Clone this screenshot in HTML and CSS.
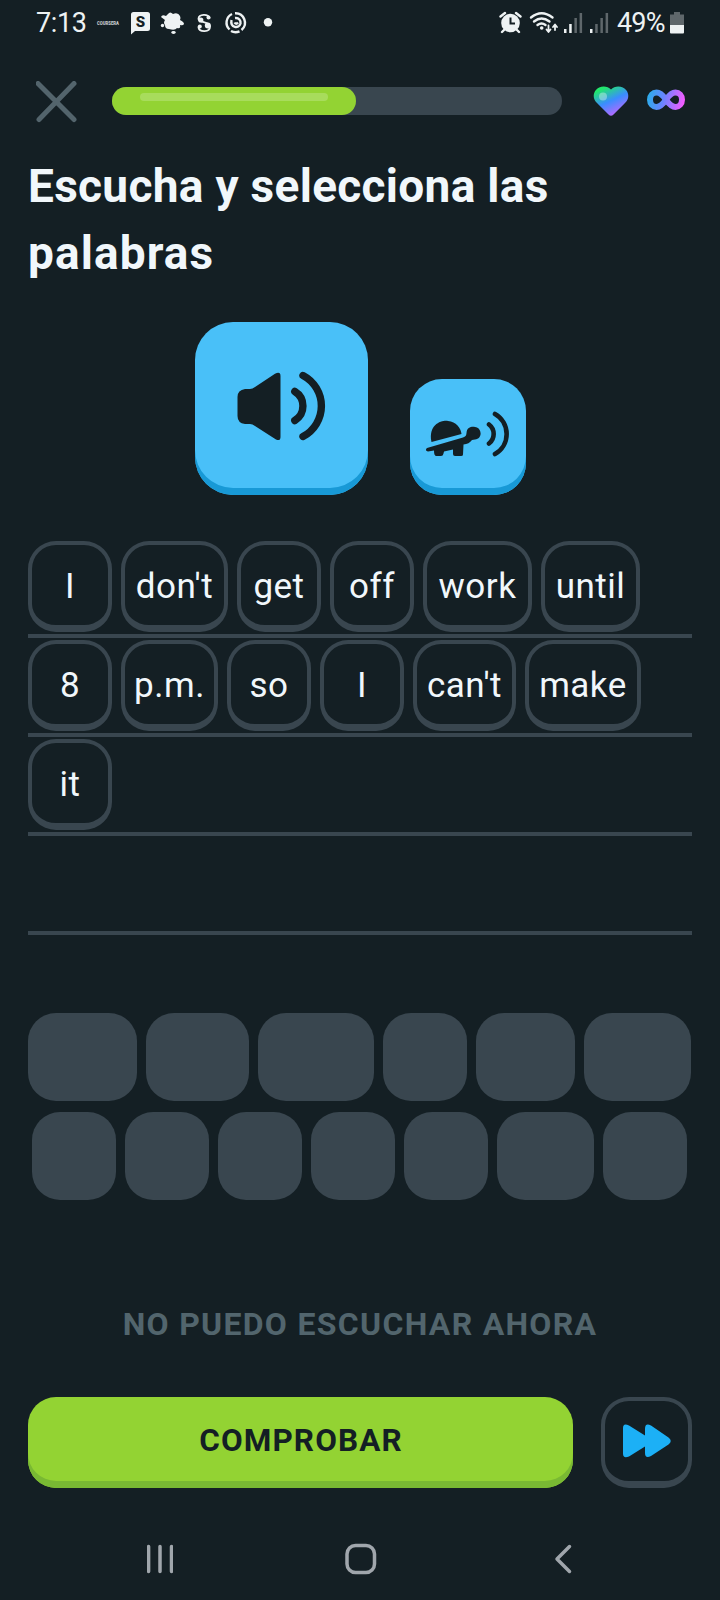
FILE: index.html
```html
<!DOCTYPE html>
<html lang="es">
<head>
<meta charset="utf-8">
<title>Escucha y selecciona las palabras</title>
<link rel="stylesheet" href="styles.css">
</head>
<body>
<div class="phone">
  <div class="status">
    <div class="status-side">
      <span class="clock">7:13</span>
      <svg class="st" width="32" height="46" viewBox="95 0 32 46"><text class="micro" x="97" y="24.500" textLength="22" lengthAdjust="spacingAndGlyphs">COURSERA</text></svg>
      <svg class="st" width="28" height="46" viewBox="127 0 28 46"><path class="ink" d="M133.500 12H147.500Q150 12 150 14.500V28.500Q150 31 147.500 31H135L131 34.500V14.500Q131 12 133.500 12Z"/><text class="badge-s" x="140.500" y="27" text-anchor="middle">S</text></svg>
      <svg class="st" width="35" height="46" viewBox="155 0 35 46"><path class="ink" d="M168 14Q170 11 173 14Q178 12 180 16Q181 18 180 20Q184 22 184 24Q183 26 180 25Q181 29 177 28Q175 31 169 29Q165 29 165 25Q163 23 165 20L161 17Q162 14 166 16Z"/><circle class="ink" cx="162.500" cy="25.500" r="1.700"/><ellipse class="ink" cx="173.500" cy="32.500" rx="2.200" ry="1.400"/></svg>
      <svg class="st" width="29" height="46" viewBox="190 0 29 46"><path class="line" d="M209.500 18C208 13.500 199 14 198.500 18.500C198 23 210 21 210 26.500C210 32.500 199.500 32.500 198.500 27.500"/><circle class="ink" cx="208.500" cy="17.500" r="2"/><circle class="ink" cx="207.800" cy="25.500" r="3"/><circle class="ink" cx="200.800" cy="20" r="2.600"/><circle class="ink" cx="199.800" cy="26.500" r="2"/></svg>
      <svg class="st" width="36" height="46" viewBox="219 0 36 46"><g class="line bold"><path d="M232 14A9.500 9.500 0 0 0 229.500 29.500"/><path d="M235 13.200A9.500 9.500 0 0 1 241.500 30"/><path d="M239.500 31.300A9.500 9.500 0 0 1 231 31"/><path d="M231.500 20C230 28 239 29 240.500 23.500C241 20.500 239 17.500 235 18"/><path d="M234.500 22.500Q236 25 238 22.500"/></g></svg>
      <svg class="st" width="26" height="46" viewBox="255 0 26 46"><circle class="ink" cx="268" cy="22.300" r="4.200"/></svg>
    </div>
    <div class="status-side">
      <svg class="st" width="31" height="46" viewBox="495 0 31 46"><circle class="ink" cx="510.500" cy="23" r="9.300"/><path class="line thick" d="M500.500 16.500L505 13M520.500 16.500L516 13M504.500 29.500L502 32M516.500 29.500L519 32"/><path class="cut" d="M510.500 17.500V23.500H515"/></svg>
      <svg class="st" width="35" height="46" viewBox="526 0 35 46"><g class="line thick"><path d="M531 17.500Q541.500 9 552.500 17.500"/><path d="M534 21.500Q541.500 15.500 549.500 21.500"/><path d="M537.500 25Q541.500 22 545.500 25"/></g><circle class="ink" cx="541.700" cy="28" r="1.800"/><path class="line thin" d="M548.500 25.500V31.500M546.500 29.500L548.500 32L550.500 29.500M555 30V25M553 27L555 24.500L557 27"/></svg>
      <svg class="st" width="26" height="46" viewBox="561 0 26 46"><path class="ink" d="M564 29h2.500v4H564zM569.200 24h2.500v9h-2.500z"/><path class="dim" d="M574.400 18h2.500v15h-2.500zM579.600 13h2.500v20h-2.500z"/></svg>
      <svg class="st" width="26" height="46" viewBox="587 0 26 46"><path class="ink" d="M590 29h2.500v4H590z"/><path class="dim" d="M595.200 24h2.500v9h-2.500zM600.400 18h2.500v15h-2.500zM605.600 13h2.500v20h-2.500z"/></svg>
      <span class="percent">49%</span>
      <svg class="st" width="23" height="46" viewBox="667 0 23 46"><path class="dim" d="M674 12h6v2.500h4V25H670V14.500h4z"/><path class="ink" d="M670 25h14v7.500q0 1-1 1h-12q-1 0-1-1z"/></svg>
    </div>
  </div>

  <header class="lesson-bar">
    <svg class="close" width="42" height="42" viewBox="0 0 42 42"><path d="M2 2.500L38 38.500M38 2.500L3 38.500"/></svg>
    <div class="progress"><div class="progress-fill"><div class="shine"></div></div></div>
    <svg class="heart" width="36" height="31" viewBox="0 0 36 31">
      <defs><linearGradient id="hg" x1="0.150" y1="0" x2="0.700" y2="1"><stop offset="0.100" stop-color="#22e86c"/><stop offset="0.520" stop-color="#3a8dff"/><stop offset="1" stop-color="#c864ff"/></linearGradient></defs>
      <path fill="url(#hg)" d="M18 3.500C22 -1 30 -.5 33.500 4.500C36.500 9 35.500 13.500 32 17L20.500 28.500Q18 31 15.500 28.500L4 17C.5 13.500 -.5 9 2.500 4.500C6 -.5 14 -1 18 3.500Z"/><circle cx="10" cy="10.500" r="4" fill="#fff" opacity=".35"/>
    </svg>
    <svg class="infinity" width="38" height="22" viewBox="0 0 38 22">
      <defs><linearGradient id="ig" gradientUnits="userSpaceOnUse" x1="0" y1="0" x2="38" y2="8"><stop offset="0" stop-color="#24b1e8"/><stop offset="0.450" stop-color="#6685ff"/><stop offset="1" stop-color="#f45bff"/></linearGradient></defs>
      <path fill="none" stroke="url(#ig)" stroke-width="6" d="M19 10.700C15 5 12.500 3.500 9.500 3.500A6.500 7.200 0 0 0 9.500 17.900C12.500 17.900 15 16.400 19 10.700C23 5 25.500 3.500 28.500 3.500A6.500 7.200 0 0 1 28.500 17.900C25.500 17.900 23 16.400 19 10.700Z"/>
    </svg>
  </header>

  <h1 class="title">Escucha y selecciona las <span class="title-end">palabras</span></h1>

  <div class="audio">
    <button class="play play-big">
      <svg width="90" height="70" viewBox="236 371 90 70"><path class="solid" d="M245 389H250Q252.500 389 255 387L275 373.800Q280.500 371 280.500 376V437Q280.500 441.500 276 439.500L255 426Q252.500 424 250 424H245Q237.500 423 237.500 416V397Q237.500 390 245 389Z"/><path class="wave" d="M294.800 391.500A17 17 0 0 1 294.800 420.500M303 375.500A34.500 34.500 0 0 1 303 436.500"/></svg>
    </button>
    <button class="play play-slow">
      <svg width="84" height="46" viewBox="426 411 84 46"><path class="solid" d="M431.500 442C428 424 442 420 448 421C456 421.500 461 428 461.500 434Z"/><path class="solid" d="M427 448L463 437.500Q466.500 436.500 466.500 433C467 427 471.500 426.500 475 427C482 427.500 483 439 475 439.500L472 440Q469 444 463.500 444.500L463 454.500Q463 456 461 456H455Q453 456 453 454V449.500L444 451.500L443.500 453.500Q443 456 441 456H436Q434 455.500 434 450.500L428 451.500Q424.500 450.500 427 448Z"/><path class="wave wave-slow" d="M489 424.500A12 12 0 0 1 489 443.500M495 414A23 23 0 0 1 495 454"/></svg>
    </button>
  </div>

  <main class="answer">
    <div class="answer-row"><span class="word">I</span><span class="word w107">don't</span><span class="word">get</span><span class="word">off</span><span class="word w109">work</span><span class="word w99">until</span></div>
    <div class="answer-row"><span class="word">8</span><span class="word w97">p.m.</span><span class="word">so</span><span class="word">I</span><span class="word w103">can't</span><span class="word w116">make</span></div>
    <div class="answer-row"><span class="word">it</span></div>
    <div class="answer-row"></div>
  </main>

  <section class="bank">
    <div class="bank-row"><i class="slot w109"></i><i class="slot w103"></i><i class="slot w116"></i><i class="slot"></i><i class="slot w99"></i><i class="slot w107"></i></div>
    <div class="bank-row"><i class="slot"></i><i class="slot"></i><i class="slot"></i><i class="slot"></i><i class="slot"></i><i class="slot w97"></i><i class="slot"></i></div>
  </section>

  <div class="cant-listen">NO PUEDO ESCUCHAR AHORA</div>

  <div class="actions">
    <button class="check">COMPROBAR</button>
    <button class="skip"><svg width="48" height="34" viewBox="0 0 48 34"><path d="M0 4Q0-1.500 6 1.500L22 11.500V5Q22-1.500 28 1.500L45.500 13.500Q50 17 45.500 20.500L28 32Q22 35 22 29V22.500L6 32.500Q0 35 0 29.500Z"/></svg></button>
  </div>

  <nav class="nav">
    <svg width="26" height="30" viewBox="147 1544 26 30"><path class="nav-line" d="M148.600 1546.500V1571.500M160 1546.500V1571.500M171.500 1546.500V1571.500"/></svg>
    <svg width="32" height="32" viewBox="0 0 32 32"><rect class="nav-line" x="2" y="2.500" width="27.500" height="27" rx="8.500"/></svg>
    <svg width="18" height="30" viewBox="0 0 18 30"><path class="nav-line" d="M15.500 2.500L3 15L15.500 27.500"/></svg>
  </nav>
</div>
</body>
</html>
```
FILE: styles.css
```css
* { box-sizing: border-box; }
body { margin: 0; background: #141f24; font-family: Roboto, "Liberation Sans", sans-serif; }
button { font-family: inherit; margin: 0; padding: 0; border: 0; background: none; }
svg { display: block; flex: none; }

.phone { width: 720px; height: 1600px; overflow: hidden; background: #141f24; color: #f1f7fb; display: flex; flex-direction: column; }

.status { height: 46px; padding: 0 30px 0 36px; display: flex; justify-content: space-between; color: #eef2f3; font-size: 27px; line-height: 46px; }
.status-side { display: flex; }
.clock { width: 59px; letter-spacing: -0.4px; }
.percent { width: 54px; padding-left: 4px; letter-spacing: -0.8px; white-space: nowrap; }
.ink { fill: #eef2f3; }
.dim { fill: #5f676b; }
.line { fill: none; stroke: #eef2f3; stroke-width: 1.8; stroke-linecap: round; stroke-linejoin: round; }
.line.bold { stroke-width: 2.4; stroke-linecap: butt; }
.line.thick { stroke-width: 2.4; }
.thick { stroke-width: 2.4; }
.cut { fill: none; stroke: #141f24; stroke-width: 2; }
.micro { font-size: 5px; font-weight: 900; fill: #c4cacc; }
.badge-s { font-size: 15px; font-weight: 900; fill: #141f24; }

.lesson-bar { height: 42px; margin-top: 35px; padding-left: 36px; display: flex; align-items: flex-start; }
.close path { stroke: #53646c; stroke-width: 5; stroke-linecap: round; }
.progress { width: 450px; height: 28px; margin: 6px 0 0 34px; border-radius: 14px; background: #39464f; flex: none; }
.progress-fill { width: 244px; height: 28px; border-radius: 14px; background: #93d333; padding: 6px 28px; }
.shine { height: 8px; border-radius: 4px; background: #a8dc5c; }
.heart { margin: 5px 0 0 31px; }
.infinity { margin: 8px 0 0 18px; }

.title { margin: 30px 28px 0 28px; font-size: 46px; line-height: 67px; font-weight: 700; letter-spacing: 0.3px; }
.title-end { letter-spacing: 1.1px; }

.audio { margin-top: 35px; height: 173px; padding-left: 195px; display: flex; align-items: flex-end; gap: 42px; }
.play { background: #49c0f8; display: flex; flex: none; }
.play-big { width: 173px; height: 173px; border-radius: 38px; box-shadow: inset 0 -7px #1899d6; padding: 49px 0 0 41px; }
.play-slow { width: 116px; height: 116px; border-radius: 32px; box-shadow: inset 0 -7px #1899d6; padding: 32px 0 0 16px; }
.solid { fill: #141f24; }
.wave { fill: none; stroke: #141f24; stroke-width: 7.4; stroke-linecap: round; }
.wave-slow { stroke-width: 4.600; }

.answer { margin: 44px 28px 0 28px; }
.answer-row { height: 99px; padding-top: 2px; border-bottom: 4px solid #39464f; display: flex; gap: 9px; }
.word { width: 84px; height: 91px; border: 4px solid #39464f; border-bottom-width: 7px; border-radius: 28px; font-size: 35px; line-height: 83px; text-align: center; letter-spacing: 0.5px; white-space: nowrap; flex: none; }

.bank { margin-top: 78px; display: flex; flex-direction: column; gap: 11px; }
.bank-row { width: 719px; display: flex; justify-content: center; gap: 9px; }
.slot { width: 84px; height: 88px; border-radius: 28px; background: #39464f; flex: none; }
.w97 { width: 97px; }
.w99 { width: 99px; }
.w103 { width: 103px; }
.w107 { width: 107px; }
.w109 { width: 109px; }
.w116 { width: 116px; }

.cant-listen { margin-top: 104px; height: 40px; text-align: center; font-size: 32px; line-height: 40px; font-weight: 700; letter-spacing: 1.3px; color: #52656d; }

.actions { margin: 53px 28px 0 28px; display: flex; gap: 28px; }
.check { width: 545px; height: 91px; border-radius: 28px; background: #93d333; box-shadow: inset 0 -7px #79b933; font-size: 31.5px; line-height: 86px; padding: 0 0 4px 1px; font-weight: 700; letter-spacing: 1.1px; color: #141f24; }
.skip { width: 91px; height: 91px; border: 4px solid #39464f; border-bottom-width: 7px; border-radius: 28px; display: flex; align-items: center; justify-content: center; }
.skip path { fill: #1cb0f6; }

.nav { margin-top: 55px; padding: 0 148px 0 147px; display: grid; grid-template-columns: 198px 1fr auto; align-items: center; }
.nav-line { fill: none; stroke: #a0a6ac; stroke-width: 3.500; stroke-linecap: round; stroke-linejoin: round; }
```
